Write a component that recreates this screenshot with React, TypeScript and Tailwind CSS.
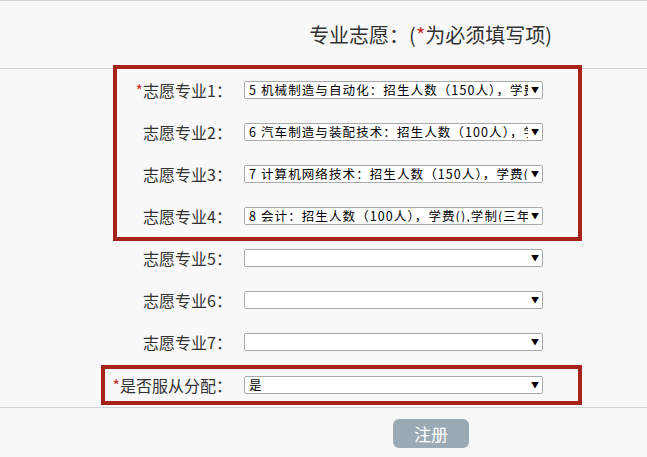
import React from 'react';

const FONT = { fontFamily: '"Microsoft YaHei", "Noto Sans CJK SC", "Noto Sans", sans-serif' };

type Row = { label: string; value: string; required?: boolean };

const boxed: Row[] = [
  { label: '志愿专业1', value: '5 机械制造与自动化：招生人数（150人），学费(),学制(三年', required: true },
  { label: '志愿专业2', value: '6 汽车制造与装配技术：招生人数（100人），学费(),学制(三年' },
  { label: '志愿专业3', value: '7 计算机网络技术：招生人数（150人），学费(),学制(三年' },
  { label: '志愿专业4', value: '8 会计：招生人数（100人），学费(),学制(三年' },
];

const open: Row[] = [
  { label: '志愿专业5', value: '' },
  { label: '志愿专业6', value: '' },
  { label: '志愿专业7', value: '' },
];

function FakeSelect({ value }: { value: string }) {
  return (
    <div className="flex items-center w-[299px] h-[18px] bg-white border border-[#a9a9a9] rounded-[2px] overflow-hidden">
      <span className="w-[283px] pl-[4px] whitespace-nowrap overflow-hidden text-[12.5px] leading-none text-black tracking-[1.1px]">
        {value}
      </span>
      <span className="w-[14px] flex items-center justify-center text-[8px] text-black">
        ▼
      </span>
    </div>
  );
}

function FieldRow({ row, labelWidth, height }: { row: Row; labelWidth: string; height: string }) {
  return (
    <div className={`flex items-center ${height}`}>
      <label className={`${labelWidth} text-right text-[16px] text-[#333] whitespace-nowrap`}>
        {row.required && <span className="text-[#c9302c]">*</span>}
        {row.label}：
      </label>
      <div className="ml-3">
        <FakeSelect value={row.value} />
      </div>
    </div>
  );
}

export default function App() {
  return (
    <div className="w-[647px] h-[457px] bg-[#f8f8f9] overflow-hidden" style={FONT}>
      <div className="h-[69px] border-t border-b border-[#d2d2d2] flex items-center justify-end pr-[95px]">
        <h1 className="text-[20px] text-[#333] font-normal">
          专业志愿：(<span className="text-[#c9302c]">*</span>为必须填写项)
        </h1>
      </div>

      <div className="ml-[113px] w-[469px] -mt-[4px] border-4 border-[#a6231b]">
        {boxed.map((r) => (
          <FieldRow key={r.label} row={r} labelWidth="w-[115px]" height="h-[42px]" />
        ))}
      </div>

      <div className="-mt-[4px]">
        {open.map((r) => (
          <FieldRow key={r.label} row={r} labelWidth="w-[232px]" height="h-[42px]" />
        ))}
      </div>

      <div className="ml-[101px] w-[481px] mt-[2px] border-4 border-[#a6231b]">
        <FieldRow row={{ label: '是否服从分配', value: '是', required: true }} labelWidth="w-[127px]" height="h-[32px]" />
      </div>

      <div className="mt-[2px] border-t border-[#d2d2d2] pt-[11px] pl-[393px]">
        <button className="w-[76px] h-[29px] rounded-[6px] bg-[#9aaab4] text-white text-[17px] leading-none">
          注册
        </button>
      </div>
    </div>
  );
}
